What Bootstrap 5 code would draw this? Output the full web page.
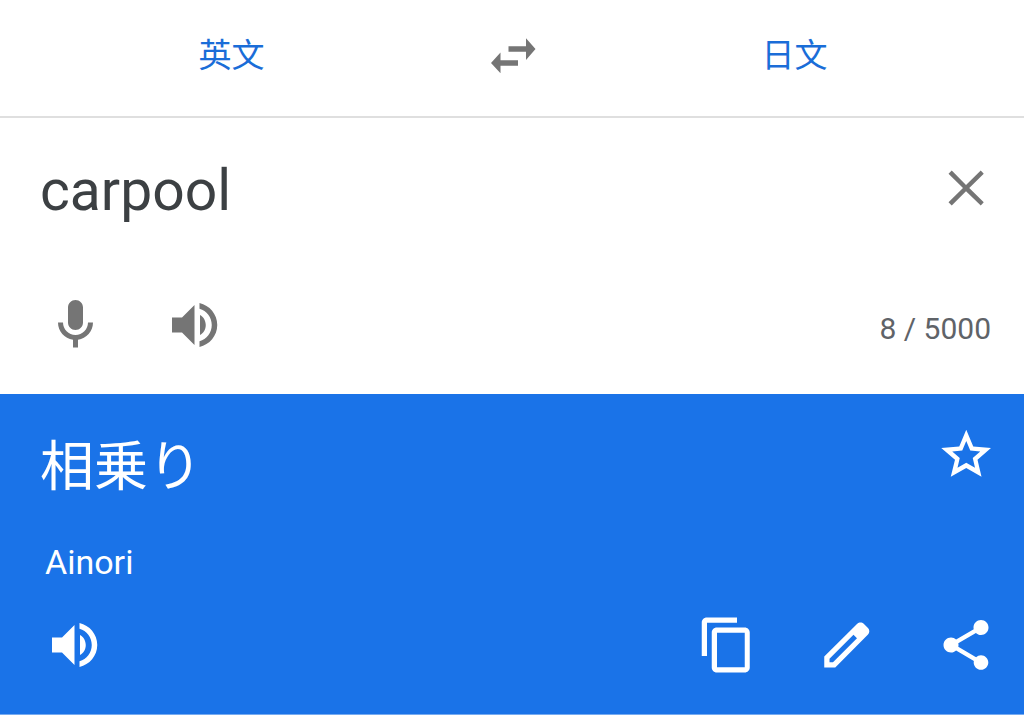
<!DOCTYPE html>
<html lang="zh-Hant">
<head>
<meta charset="utf-8">
<meta name="viewport" content="width=device-width, initial-scale=1">
<title>Translate</title>
<link href="https://cdn.jsdelivr.net/npm/bootstrap@5.3.0/dist/css/bootstrap.min.css" rel="stylesheet">
<style>
  body { font-family: Roboto, "Noto Sans CJK TC", sans-serif; background: #fff; color: #3c4043; }
  .lang-bar { padding: 26px 0 30px 2px; border-bottom: 2px solid #dfdfdf; }
  .lang-btn { font-family: "Noto Sans CJK TC", sans-serif; font-size: 33px; line-height: 54px; color: #1a6dd8; }
  .swap-cell { padding: 0 22px; }
  .icon-btn { width: 60px; height: 60px; color: #757575; }
  .icon-btn svg { display: block; width: 60px; height: 60px; fill: currentColor; }
  .pane { padding: 40px 28px 39px 40px; }
  .source-text { font-size: 57px; line-height: 66px; height: 68px; color: #3c4043; resize: none; outline: 0; overflow: hidden; }
  .tool-row { padding-left: 5px; }
  .tool-gap { gap: 60px; }
  .source-tools { margin-top: 69px; }
  .char-count { font-size: 30px; line-height: 36px; color: #5f6368; padding: 8px 5px 0 0; }
  .result-pane { background: #1a73e8; color: #fff; padding-top: 31px; border-bottom: 1px solid #76abf1; }
  .result-pane .icon-btn { color: #fff; }
  .result-text { font-family: "Noto Sans CJK JP", sans-serif; font-size: 54px; line-height: 76px; }
  .romaji { font-size: 34px; line-height: 40px; padding-left: 5px; margin-top: 41px; }
  .result-tools { margin-top: 33px; }
</style>
</head>
<body>
<svg class="d-none" aria-hidden="true">
  <symbol id="speaker" viewBox="0 0 24 24">
    <path d="M2.800 9v6h4l5 5V4L6.800 9H2.800zM16.300 12c0-1.770-.900-3.290-2.300-4.030v8.050c1.400-.730 2.300-2.250 2.300-4.020zM13.800 3.200v2.300c2.890.860 4.900 3.400 4.900 6.500s-2.010 5.640-4.900 6.500v2.300c4.010-.910 7.100-4.490 7.100-8.800s-3.090-7.890-7.100-8.800z"/>
  </symbol>
</svg>

<header class="lang-bar d-flex align-items-start">
  <div class="flex-fill text-center w-50"><button type="button" class="lang-btn btn border-0 p-0">英文</button></div>
  <div class="swap-cell flex-shrink-0">
    <button type="button" class="icon-btn btn border-0 p-0" aria-label="Swap languages">
      <svg viewBox="0 0 24 24"><path d="M7 10.600L3.200 14.800 7 18.900v-3h7v-2.200H7v-3.100zM21 9.200l-3.800-4.300v3.200H10.200v2.200h7v3.300L21 9.200z"/></svg>
    </button>
  </div>
  <div class="flex-fill text-center w-50"><button type="button" class="lang-btn btn border-0 p-0">日文</button></div>
</header>

<main>
  <section class="pane">
    <div class="d-flex align-items-start">
      <textarea class="source-text flex-fill border-0 p-0 bg-transparent" rows="1" aria-label="Source text" spellcheck="false">carpool</textarea>
      <button type="button" class="icon-btn btn border-0 p-0" aria-label="Clear">
        <svg viewBox="0 0 24 24"><path d="M19.100 6.300L17.900 5 12 10.800 6.300 5 5 6.300 10.800 12 5 17.700 6.300 19 12 13.300 17.900 19 19.100 17.700 13.300 12z"/></svg>
      </button>
    </div>
    <div class="source-tools tool-row d-flex align-items-center justify-content-between">
      <div class="tool-gap d-flex">
        <button type="button" class="icon-btn btn border-0 p-0" aria-label="Speak">
          <svg viewBox="0 0 24 24"><path d="M12.200 14c1.660 0 3-1.340 3-3V5c0-1.660-1.340-3-3-3s-3 1.340-3 3v6c0 1.660 1.340 3 3 3zm5-3c0 2.760-2.240 5-5 5s-5-2.240-5-5H5.200c0 3.530 2.610 6.430 6 6.920V21h2v-3.080c3.390-.490 6-3.390 6-6.920h-2z"/></svg>
        </button>
        <button type="button" class="icon-btn btn border-0 p-0" aria-label="Listen to source"><svg><use href="#speaker"/></svg></button>
      </div>
      <div class="char-count">8 / 5000</div>
    </div>
  </section>

  <section class="pane result-pane">
    <div class="d-flex align-items-start justify-content-between">
      <div class="result-text" lang="ja">相乗り</div>
      <button type="button" class="icon-btn btn border-0 p-0" aria-label="Save translation">
        <svg viewBox="0 0 24 24"><path fill-rule="evenodd" d="M22 9.200l-7.100-.620L12.100 1.900 9.300 8.600 2.100 9.200l5.500 4.700L5.900 20.700 12.100 17.200 18.200 20.700l-1.600-6.800L22 9.200zM12.100 15.100l-3.500 2 .9-3.900-3-2.600 4-.400L12.100 6.400l1.600 3.800 4 .400-3 2.600.9 3.900z"/></svg>
      </button>
    </div>
    <div class="romaji">Ainori</div>
    <div class="result-tools tool-row d-flex justify-content-between">
      <button type="button" class="icon-btn btn border-0 p-0" aria-label="Listen to translation"><svg><use href="#speaker"/></svg></button>
      <div class="tool-gap d-flex">
        <button type="button" class="icon-btn btn border-0 p-0" aria-label="Copy">
          <svg viewBox="0 0 24 24"><path d="M16.400 1H4.300c-1.100 0-2 .900-2 2v13.400h2.100V3.100h12V1zM19.500 5H8.300c-1.100 0-2 .900-2 2v14c0 1.100.900 2 2 2h11.200c1.100 0 2-.900 2-2V7c0-1.100-.900-2-2-2zm0 15.900H8.400V7.100h11.100v13.800z"/></svg>
        </button>
        <button type="button" class="icon-btn btn border-0 p-0" aria-label="Edit">
          <svg viewBox="0 0 24 24"><path fill-rule="evenodd" d="M3.300 16.600L16.500 3.500c.700-.700 1.900-.700 2.600 0l1.700 1.700c.700.700.700 1.900 0 2.600L7.700 21H3.300zM5.400 17.500V18.900h1.400L16.400 9.300l-1.400-1.400z"/></svg>
        </button>
        <button type="button" class="icon-btn btn border-0 p-0" aria-label="Share">
          <svg viewBox="0 0 24 24"><path d="M18 16.080c-.760 0-1.440.300-1.960.770L8.910 12.700c.050-.230.090-.460.090-.700s-.040-.470-.090-.700l7.050-4.110c.540.500 1.250.810 2.040.810 1.660 0 3-1.340 3-3s-1.340-3-3-3-3 1.340-3 3c0 .240.040.470.090.700L8.040 9.810C7.500 9.310 6.790 9 6 9c-1.660 0-3 1.340-3 3s1.340 3 3 3c.790 0 1.500-.310 2.040-.810l7.120 4.160c-.050.210-.080.430-.080.650 0 1.610 1.310 2.920 2.920 2.920s2.920-1.310 2.920-2.920-1.310-2.920-2.920-2.920z"/></svg>
        </button>
      </div>
    </div>
  </section>
</main>
<script src="https://cdn.jsdelivr.net/npm/bootstrap@5.3.0/dist/js/bootstrap.bundle.min.js"></script>
</body>
</html>
